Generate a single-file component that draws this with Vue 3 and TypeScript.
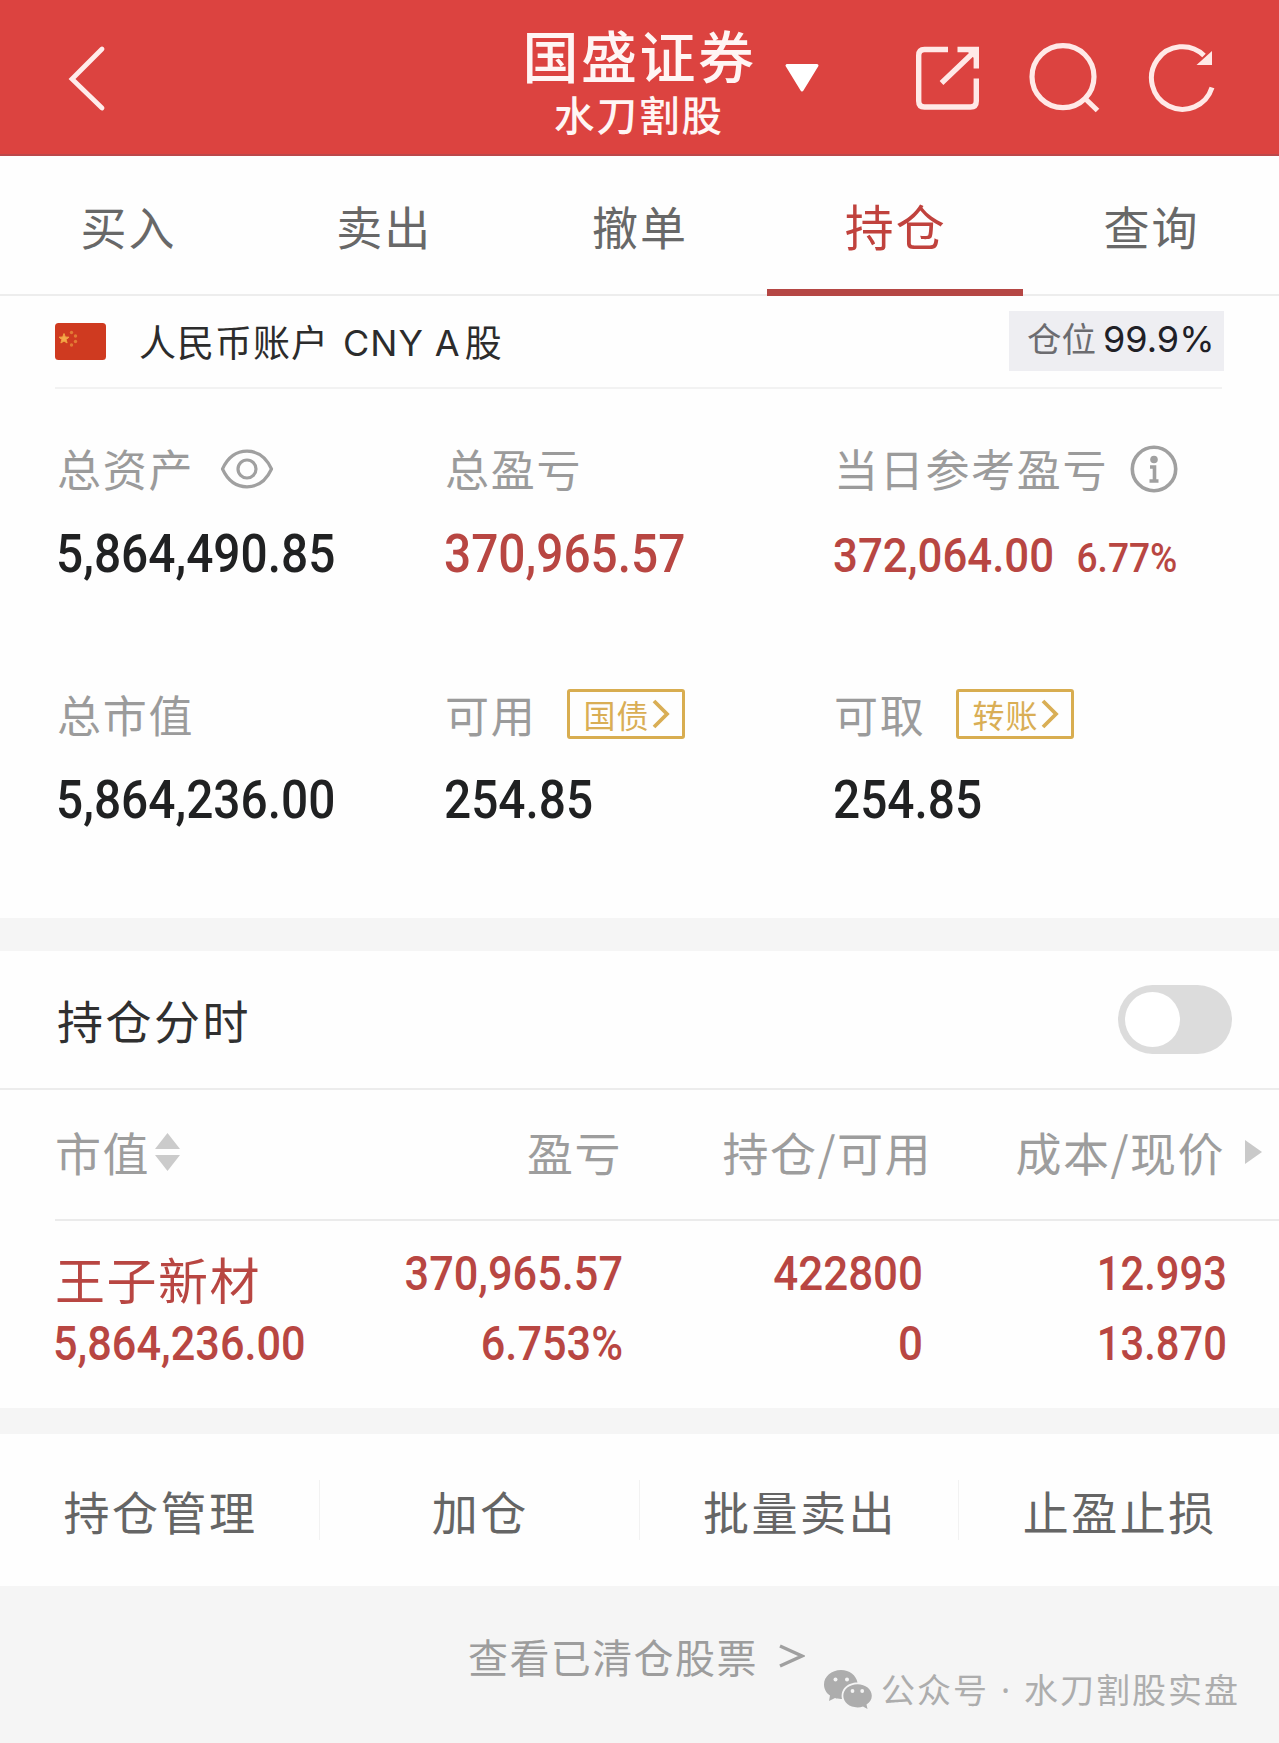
<script setup lang="ts">
import { ref } from 'vue'

interface Holding {
  name: string
  value: string
  profit: string
  rate: string
  amount: string
  usable: string
  cost: string
  price: string
}

const tabs = ['买入', '卖出', '撤单', '持仓', '查询']
const activeTab = ref('持仓')
const actions = ['持仓管理', '加仓', '批量卖出', '止盈止损']
const chartOn = ref(false)

const holdings: Holding[] = [
  {
    name: '王子新材',
    value: '5,864,236.00',
    profit: '370,965.57',
    rate: '6.753%',
    amount: '422800',
    usable: '0',
    cost: '12.993',
    price: '13.870',
  },
]
</script>

<template>
  <div class="page">
    <header class="topbar">
      <svg class="back" width="40" height="70" viewBox="0 0 40 70" fill="none">
        <path d="M35 6 L5 36 L35 65" stroke="#ffeceb" stroke-width="4.8" stroke-linecap="round" />
      </svg>
      <div class="titles">
        <div class="title">国盛证券</div>
        <div class="subtitle">水刀割股</div>
      </div>
      <svg class="caret" width="36" height="30" viewBox="0 0 36 30">
        <path d="M3 2.5 H33 L18 27 Z" fill="#fff" stroke="#fff" stroke-width="3" stroke-linejoin="round" />
      </svg>
      <svg class="share" width="66" height="66" viewBox="0 0 66 66" fill="none" stroke="#ffe9e7" stroke-width="5.4">
        <path d="M33 3.500 H9.500 Q3.700 3.500 3.700 9.500 V55 Q3.700 61 9.500 61 H55.500 Q61.300 61 61.300 55 V32.500" />
        <path d="M42.500 3.500 H61.300 V22.500 M59 6 L26.500 37" />
        <path d="M50 3 H62 V15 Z" fill="#ffe9e7" stroke="none" />
      </svg>
      <svg class="search" width="74" height="72" viewBox="0 0 74 72" fill="none" stroke="#ffe9e7" stroke-width="5.2">
        <circle cx="35" cy="33.700" r="31" />
        <path d="M56 54.500 L69.500 67.500" />
      </svg>
      <svg class="reload" width="68" height="72" viewBox="0 0 68 72" fill="none" stroke="#ffe9e7" stroke-width="5">
        <path d="M64 44.500 A31 31.300 0 1 1 56 12.500" />
        <path d="M64 8 V22 H48.500 Z" fill="#ffe9e7" stroke="none" />
      </svg>
    </header>

    <nav class="tabs">
      <button v-for="t in tabs" :key="t" class="tab" :class="{ active: t === activeTab }" @click="activeTab = t">
        {{ t }}
      </button>
    </nav>

    <section class="account">
      <svg class="flag" width="51" height="37" viewBox="0 0 51 37">
        <rect width="51" height="37" rx="3.500" fill="#cf3a20" />
        <path d="M9 10.500 L10.300 14 L14 14.200 L11.100 16.500 L12.100 20 L9 18 L5.900 20 L6.900 16.500 L4 14.200 L7.700 14 Z" fill="#f5a84a" stroke="#f0a040" stroke-width="1" />
        <g fill="#e27a35">
          <circle cx="16.500" cy="9.500" r="1.700" />
          <circle cx="20.500" cy="13" r="1.700" />
          <circle cx="20.500" cy="18.500" r="1.700" />
          <circle cx="16.500" cy="22" r="1.700" />
        </g>
      </svg>
      <span class="account-name">人民币账户<span class="latin">CNY</span><span class="latin a">A</span>股</span>
      <span class="ratio">仓位<b>99.9%</b></span>
    </section>

    <section class="assets">
      <div class="cell">
        <div class="label">
          总资产
          <svg class="eye" width="54" height="40" viewBox="0 0 54 40" fill="none" stroke="#a0a0a0" stroke-width="3.200">
            <path d="M2.500 20 C8 8 17 2.200 27 2.200 C37 2.200 46 8 51.500 20 C46 32 37 37.800 27 37.800 C17 37.800 8 32 2.500 20 Z" stroke-linejoin="round" />
            <circle cx="27" cy="20" r="9" />
          </svg>
        </div>
        <div class="value"><span>5,864,490.85</span></div>
      </div>
      <div class="cell">
        <div class="label">总盈亏</div>
        <div class="value red"><span>370,965.57</span></div>
      </div>
      <div class="cell">
        <div class="label">
          当日参考盈亏
          <svg class="info" width="48" height="48" viewBox="0 0 48 48" fill="none" stroke="#a0a0a0" stroke-width="3.600">
            <circle cx="24" cy="24" r="21.700" />
            <circle cx="24" cy="14.500" r="3.800" fill="#a0a0a0" stroke="none" />
            <path d="M20 22 H24.500 V36 M19.500 36 H28.500" />
          </svg>
        </div>
        <div class="value red today"><span>372,064.00</span><em>6.77%</em></div>
      </div>
      <div class="cell">
        <div class="label">总市值</div>
        <div class="value"><span>5,864,236.00</span></div>
      </div>
      <div class="cell">
        <div class="label">
          可用
          <button class="link">
            国债
            <svg width="18" height="30" viewBox="0 0 18 30" fill="none"><path d="M2 2 L15 15 L2 28" stroke="#d9ae55" stroke-width="3.800" /></svg>
          </button>
        </div>
        <div class="value"><span>254.85</span></div>
      </div>
      <div class="cell">
        <div class="label">
          可取
          <button class="link">
            转账
            <svg width="18" height="30" viewBox="0 0 18 30" fill="none"><path d="M2 2 L15 15 L2 28" stroke="#d9ae55" stroke-width="3.800" /></svg>
          </button>
        </div>
        <div class="value"><span>254.85</span></div>
      </div>
    </section>

    <section class="switch-row">
      <span>持仓分时</span>
      <button class="toggle" :class="{ on: chartOn }" @click="chartOn = !chartOn"><i /></button>
    </section>

    <section class="table">
      <div class="thead">
        <div class="c1">
          市值
          <svg width="25" height="38" viewBox="0 0 25 38" fill="#cbcbcb"><path d="M12.500 0 L25 16 H0 Z M0 22 H25 L12.500 38 Z" /></svg>
        </div>
        <div class="c2">盈亏</div>
        <div class="c3">持仓/可用</div>
        <div class="c4">成本/现价</div>
        <svg class="more" width="17" height="24" viewBox="0 0 17 24"><path d="M0 0 L17 12 L0 24 Z" fill="#c9c9c9" /></svg>
      </div>
      <div v-for="h in holdings" :key="h.name" class="trow">
        <div class="c1"><span class="stock">{{ h.name }}</span><span class="num">{{ h.value }}</span></div>
        <div class="c2"><span class="num">{{ h.profit }}</span><span class="num">{{ h.rate }}</span></div>
        <div class="c3"><span class="num">{{ h.amount }}</span><span class="num">{{ h.usable }}</span></div>
        <div class="c4"><span class="num">{{ h.cost }}</span><span class="num">{{ h.price }}</span></div>
      </div>
    </section>

    <section class="actions">
      <button v-for="a in actions" :key="a">{{ a }}</button>
    </section>

    <footer class="footer">
      <div class="cleared">
        查看已清仓股票
        <svg width="26" height="24" viewBox="0 0 26 24" fill="none"><path d="M1 2 L23 12 L1 22" stroke="#a0a0a0" stroke-width="3.400" /></svg>
      </div>
      <div class="watermark">
        <svg width="48" height="40" viewBox="0 0 48 40">
          <path d="M17 0 C7.500 0 0 6.500 0 14.500 C0 19 2.300 23 6 25.600 L5 31 L11 28 C13 28.700 15 29 18 28.900 C16 19 24 12.500 33.500 12.600 C32 5 25.500 0 17 0 Z" fill="#adadad" />
          <path d="M33.500 14.200 C25.500 14.200 19.300 19.300 19.300 25.800 C19.300 32.300 25.500 37.400 33.500 37.400 C35.500 37.400 37.400 37 39 36.400 L43.500 39 L42.500 34.500 C45.800 32.500 47.800 29.500 47.800 25.800 C47.800 19.300 41.500 14.200 33.500 14.200 Z" fill="#adadad" />
          <g fill="#f4f4f4">
            <circle cx="11.500" cy="9.500" r="2" />
            <circle cx="23" cy="9.500" r="2" />
            <circle cx="28.500" cy="21" r="1.900" />
            <circle cx="38.200" cy="21" r="1.900" />
          </g>
        </svg>
        <span>公众号</span><i>·</i><span>水刀割股实盘</span>
      </div>
    </footer>
  </div>
</template>

<style>
body {
  margin: 0;
  background: #f5f5f5;
}
</style>

<style scoped>
.page {
  width: 1279px;
  height: 1743px;
  display: flex;
  flex-direction: column;
  overflow: hidden;
  background: #fefefe;
  font-family: 'Noto Sans CJK SC', 'Noto Sans', sans-serif;
  font-weight: 400;
}
button {
  margin: 0;
  padding: 0;
  border: 0;
  background: none;
  font: inherit;
  color: inherit;
  letter-spacing: inherit;
}
svg {
  flex: none;
  display: block;
}

.topbar {
  height: 156px;
  flex: none;
  box-sizing: border-box;
  display: flex;
  align-items: flex-start;
  background: #dc4340;
  border-bottom: 2px solid #bb484b;
  color: #fff5f4;
}
.back { margin: 43px 0 0 67px; }
.titles {
  width: 232px;
  margin-left: 415px;
  padding-top: 24px;
  text-align: center;
}
.title {
  font-size: 56px;
  line-height: 60px;
  font-weight: 500;
  letter-spacing: 2.500px;
  margin-right: -3px;
}
.subtitle {
  font-size: 40.500px;
  line-height: 46px;
  margin: 7px -2px 0 0;
  letter-spacing: 2px;
  font-weight: 500;
}
.caret { margin: 63px 0 0 30px; }
.share { margin: 46px 0 0 95px; }
.search { margin: 43px 0 0 47px; }
.reload { margin: 43px 0 0 46px; }

.tabs {
  height: 140px;
  flex: none;
  box-sizing: border-box;
  display: flex;
  border-bottom: 2px solid #ededed;
}
.tab {
  flex: 1;
  box-sizing: border-box;
  height: 140px;
  padding: 0 0 2px 1px;
  font-size: 46px;
  letter-spacing: 2px;
  color: #686868;
}
.tab.active {
  color: #c0423d;
  font-size: 49px;
  padding-bottom: 0;
  border-bottom: 7px solid #b54744;
  border-top: 3px solid transparent;
}

.account {
  height: 93px;
  flex: none;
  box-sizing: border-box;
  margin: 0 57px 0 55px;
  display: flex;
  align-items: flex-start;
  border-bottom: 2px solid #f2f2f2;
  color: #2c2c2c;
}
.flag { margin-top: 27px; }
.account-name {
  margin: 20px 0 0 33px;
  font-size: 37px;
  line-height: 50px;
  letter-spacing: 1px;
}
.latin {
  position: relative;
  top: -1px;
  font-family: Inter, sans-serif;
  font-size: 36px;
  margin-left: 14px;
}
.latin.a { margin: 0 4px 0 11px; }
.ratio {
  margin: 15px -2px 0 auto;
  width: 215px;
  height: 60px;
  flex: none;
  box-sizing: border-box;
  padding-left: 18px;
  background: #eeeef2;
  color: #6c6c70;
  font-size: 34.500px;
  line-height: 52px;
  white-space: nowrap;
}
.ratio b {
  font-family: Inter, sans-serif;
  font-weight: 400;
  font-size: 36px;
  margin-left: 7px;
  color: #202026;
}

.assets {
  height: 529px;
  flex: none;
  box-sizing: border-box;
  padding: 50px 0 0 57px;
  display: grid;
  grid-template-columns: 388px 389px 1fr;
  grid-template-rows: 246px 246px;
}
.label {
  height: 58px;
  display: flex;
  align-items: center;
  font-size: 44px;
  letter-spacing: 1.700px;
  color: #9b9b9b;
  white-space: nowrap;
}
.eye { margin: 2px 0 0 26px; }
.info { margin: 2px 0 0 22px; }
.value {
  height: 70px;
  margin: 22px 0 0 -1px;
  display: flex;
  align-items: baseline;
  font: 500 53.500px/70px Roboto, sans-serif;
  color: #202122;
  transform: scaleX(0.894);
  transform-origin: left;
}
.red { color: #b84642; }
.today { padding-top: 2px; }
.today span { font-size: 49px; }
.today em {
  font-style: normal;
  font-size: 41.500px;
  margin-left: 25px;
}
.link {
  width: 118px;
  height: 50px;
  margin-left: 31px;
  box-sizing: border-box;
  border: 3px solid #d8ad50;
  border-radius: 3px;
  padding-left: 13px;
  display: flex;
  align-items: center;
  font-size: 32px;
  letter-spacing: 1px;
  line-height: 42px;
  color: #d9ae55;
}
.link svg { margin-left: 3px; }

.switch-row {
  height: 172px;
  flex: none;
  box-sizing: border-box;
  border-top: 33px solid #f5f5f5;
  border-bottom: 2px solid #ececec;
  padding: 0 47px 0 57px;
  display: flex;
  align-items: center;
  justify-content: space-between;
  font-size: 46px;
  letter-spacing: 2.500px;
  color: #303030;
}
.switch-row span { padding-bottom: 2px; }
.toggle {
  width: 114px;
  height: 69px;
  border-radius: 35px;
  background: #dcdcdc;
  padding-left: 7px;
}
.toggle i {
  display: block;
  width: 55px;
  height: 55px;
  border-radius: 50%;
  background: #fff;
}
.toggle.on i { margin-left: 43px; }

.table { flex: none; color: #b84642; }
.thead, .trow {
  display: grid;
  grid-template-columns: 300px 268px 307px 297px 1fr;
  margin-left: 55px;
}
.thead {
  height: 131px;
  box-sizing: border-box;
  padding-bottom: 8px;
  align-items: center;
  font-size: 46px;
  letter-spacing: 1.500px;
  color: #9d9d9d;
  border-bottom: 2px solid #ebebeb;
}
.thead .c1 { display: flex; align-items: center; }
.thead .c1 svg { margin: 2px 0 0 5px; }
.thead .c2, .thead .c3, .thead .c4 { text-align: right; }
.thead .c2 { padding-right: 1px; }
.thead .c3 { margin-right: -2px; }
.thead .c4 { padding-right: 2px; }
.more { justify-self: start; margin: 2px 0 0 18px; }
.trow { height: 187px; }
.trow > div { padding-top: 18px; }
.trow .c2, .trow .c3, .trow .c4 { text-align: right; }
.stock {
  display: block;
  height: 70px;
  font-size: 50px;
  line-height: 78px;
  letter-spacing: 1.500px;
}
.num {
  display: block;
  height: 70px;
  font: 500 48.500px/70px Roboto, sans-serif;
  transform: scaleX(0.892);
  transform-origin: right;
}
.c1 .num { transform-origin: left; margin-left: -2px; }
.trow .c3 { padding-right: 7px; }
.c3 .num { transform: scaleX(0.905); }
.c4 .num { transform: scaleX(0.86); }

.actions {
  height: 178px;
  flex: none;
  box-sizing: border-box;
  border-top: 26px solid #f5f5f5;
  display: flex;
  align-items: center;
}
.actions button {
  flex: 1;
  height: 60px;
  line-height: 58px;
  font-size: 46px;
  letter-spacing: 2.500px;
  padding-left: 2px;
  color: #656565;
  border-right: 1px solid #f2f2f2;
}
.actions button:last-child { border-color: transparent; }

.footer {
  flex: 1;
  position: relative;
  background: #f5f5f5;
}
.cleared {
  display: flex;
  align-items: center;
  margin: 40px 0 0 468px;
  height: 60px;
  font-size: 40px;
  letter-spacing: 1.400px;
  color: #9d9d9d;
}
.cleared svg { margin-left: 21px; }
.watermark {
  position: absolute;
  left: 824px;
  top: 79px;
  display: flex;
  align-items: center;
  height: 50px;
  font-size: 34px;
  line-height: 46px;
  letter-spacing: 2px;
  color: #adadad;
  white-space: nowrap;
}
.watermark span { padding-bottom: 3px; }
.watermark span:first-of-type { margin-left: 9px; }
.watermark i {
  font-style: normal;
  font-family: 'Noto Sans', sans-serif;
  width: 35px;
  text-align: center;
}
</style>
